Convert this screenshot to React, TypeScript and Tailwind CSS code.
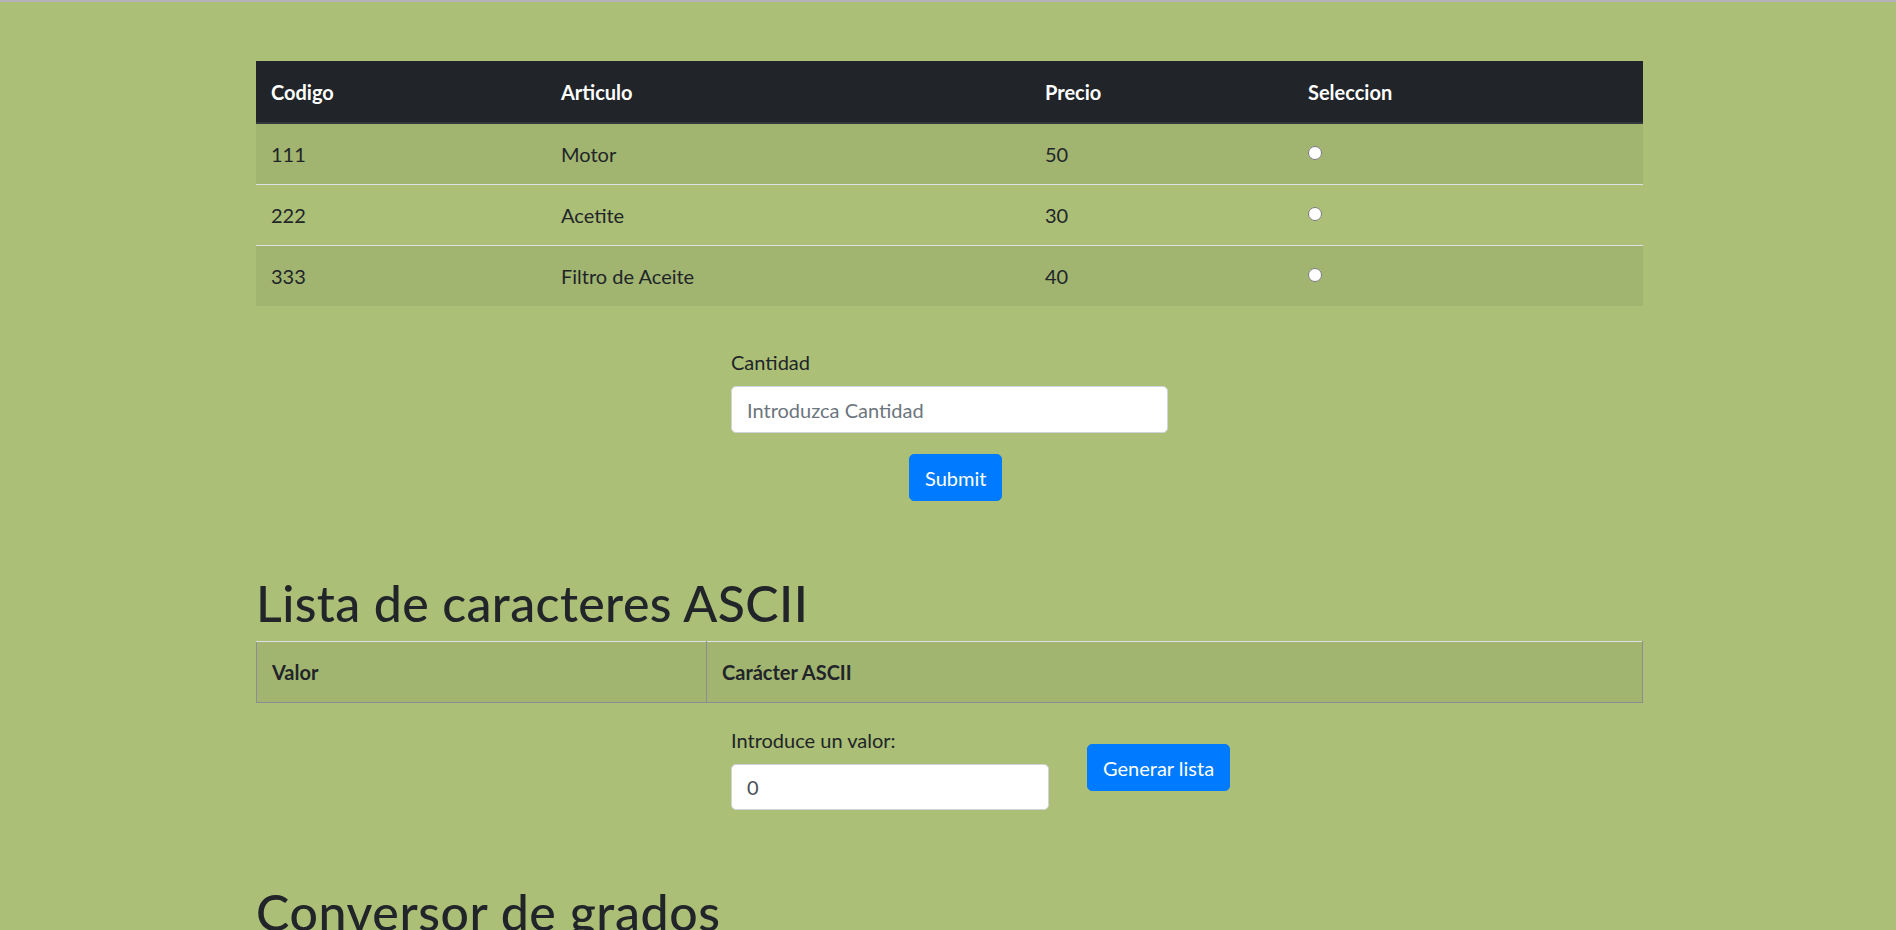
import { useState } from "react";

const articulos = [
  { codigo: "111", nombre: "Motor", precio: "50" },
  { codigo: "222", nombre: "Acetite", precio: "30" },
  { codigo: "333", nombre: "Filtro de Aceite", precio: "40" },
];

const App = () => {
  const [seleccion, setSeleccion] = useState<string | null>(null);
  const [cantidad, setCantidad] = useState("");
  const [valor, setValor] = useState("0");

  return (
    <div className="min-h-screen bg-[#abbf76] border-t-2 border-[#b4b0bc] pb-20 font-['Lato','Liberation_Sans',sans-serif] text-[20px] leading-[30px] text-[#212529]">
      <div className="ml-[256px] w-[1387px] pt-[59px]">
        {/* Tabla de articulos */}
        <table className="w-full table-fixed border-collapse text-left">
          <colgroup>
            <col className="w-[290px]" />
            <col className="w-[484px]" />
            <col className="w-[263px]" />
            <col className="w-[350px]" />
          </colgroup>
          <thead>
            <tr className="bg-[#212529] text-white">
              <th className="h-[62px] border-b-2 border-[#32383e] px-[15px] font-bold">Codigo</th>
              <th className="h-[62px] border-b-2 border-[#32383e] px-[15px] font-bold">Articulo</th>
              <th className="h-[62px] border-b-2 border-[#32383e] px-[15px] font-bold">Precio</th>
              <th className="h-[62px] border-b-2 border-[#32383e] px-[15px] font-bold">Seleccion</th>
            </tr>
          </thead>
          <tbody>
            {articulos.map((a, i) => (
              <tr
                key={a.codigo}
                className={`${i % 2 === 0 ? "bg-[#a2b570]" : ""} ${i > 0 ? "border-t border-[#dee2e6]" : ""}`}
              >
                <td className="h-[61px] px-[15px]">{a.codigo}</td>
                <td className="h-[61px] px-[15px]">{a.nombre}</td>
                <td className="h-[61px] px-[15px]">{a.precio}</td>
                <td className="h-[61px] px-[15px]">
                  <input
                    type="radio"
                    name="seleccion"
                    checked={seleccion === a.codigo}
                    onChange={() => setSeleccion(a.codigo)}
                    className="block w-[14px] h-[14px] m-0 -translate-y-[1px]"
                  />
                </td>
              </tr>
            ))}
          </tbody>
        </table>

        {/* Cantidad */}
        <div className="ml-[475px] mt-[41px] w-[437px]">
          <label className="block mb-[9px]">Cantidad</label>
          <input
            type="text"
            value={cantidad}
            onChange={(e) => setCantidad(e.target.value)}
            placeholder="Introduzca Cantidad"
            className="block w-full h-[47px] px-[15px] bg-white border border-[#ced4da] rounded-[5px] text-[#495057] placeholder:text-[#6c757d] outline-none"
          />
          <button className="mt-[21px] ml-[178px] h-[47px] px-[15px] bg-[#007bff] border border-[#007bff] rounded-[5px] text-white">
            Submit
          </button>
        </div>

        {/* Lista ASCII */}
        <h1 className="mt-[72px] mb-[8px] text-[50px] leading-[60px] font-medium tracking-[0.4px]">
          Lista de caracteres ASCII
        </h1>
        <table className="w-full table-fixed border-collapse text-left">
          <colgroup>
            <col className="w-[450px]" />
            <col />
          </colgroup>
          <thead>
            <tr className="bg-[#a2b570]">
              <th className="h-[61px] px-[15px] font-bold border-t border-t-[#dee2e6] border-l border-r border-b border-[#8b8d92]">
                Valor
              </th>
              <th className="h-[61px] px-[15px] font-bold border-t border-t-[#dee2e6] border-l border-r border-b border-[#8b8d92]">
                Carácter ASCII
              </th>
            </tr>
          </thead>
        </table>

        <div className="ml-[475px] mt-[22px] flex items-center gap-[38px]">
          <div>
            <label className="block mb-[9px]">Introduce un valor:</label>
            <input
              type="number"
              value={valor}
              onChange={(e) => setValor(e.target.value)}
              className="block w-[318px] h-[46px] px-[15px] bg-white border border-[#ced4da] rounded-[5px] text-[#495057] outline-none [appearance:textfield]"
            />
          </div>
          <button className="h-[47px] px-[15px] bg-[#007bff] border border-[#007bff] rounded-[5px] text-white">
            Generar lista
          </button>
        </div>

        {/* Conversor */}
        <h1 className="mt-[72px] mb-[8px] text-[50px] leading-[60px] font-medium tracking-[0.6px]">
          Conversor de grados
        </h1>
        <div className="ml-[475px] w-[437px]">
          <label className="block mb-[9px]">Grados Celsius</label>
          <input
            type="text"
            className="block w-full h-[47px] px-[15px] bg-white border border-[#ced4da] rounded-[5px] outline-none"
          />
        </div>
      </div>
    </div>
  );
};

export default App;
